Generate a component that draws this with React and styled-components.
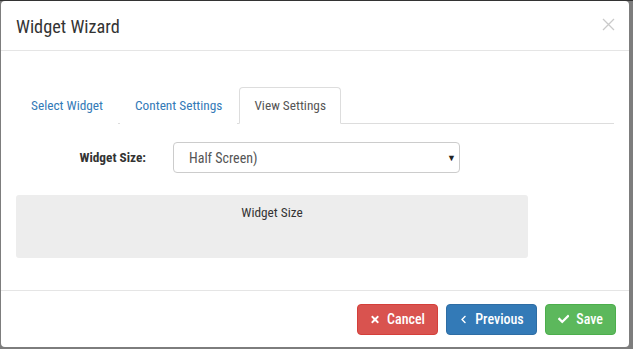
import styled, { createGlobalStyle } from "styled-components";
import { FaTimes, FaChevronLeft, FaCheck } from "react-icons/fa";

const GlobalStyle = createGlobalStyle`
  * { box-sizing: border-box; }
  html, body { margin: 0; height: 100%; }
  body {
    background: #7d7d7d;
    border-top: 1px solid #333;
    font-family: Roboto, "Liberation Sans", Arial, sans-serif;
    font-stretch: condensed;
    font-size: 14px;
    color: #333;
  }
`;

const Modal = styled.div`
  margin: 0 4px 0 1px;
  height: 346px;
  background: #fff;
  border-radius: 4px;
  display: flex;
  flex-direction: column;
`;

const Header = styled.div`
  height: 50px;
  padding: 0 15px;
  display: flex;
  align-items: center;
  justify-content: space-between;
  border-bottom: 1px solid #e5e5e5;
`;

const Title = styled.h4`
  margin: 0;
  padding-top: 2px;
  font-size: 18.3px;
  font-weight: 400;
  color: #333;
`;

const Close = styled.button`
  border: 0;
  background: none;
  padding: 0;
  margin: 0 -1px 2px 0;
  display: flex;
  color: #cacaca;
`;

const Body = styled.div`
  flex: 1;
  padding: 36px 15px 0;
`;

const Tabs = styled.ul`
  list-style: none;
  margin: 0;
  padding: 0;
  display: flex;
  border-bottom: 1px solid #ddd;
`;

const Tab = styled.li`
  height: 37px;
  padding: 0 14px;
  margin-right: 2px;
  margin-bottom: -1px;
  display: flex;
  align-items: center;
  font-size: 13.3px;
  color: ${(p) => (p.$active ? "#555" : "#337ab7")};
  background: #fff;
  border: 1px solid ${(p) => (p.$active ? "#ddd" : "transparent")};
  border-bottom-color: ${(p) => (p.$active ? "#fff" : "transparent")};
  border-radius: 4px 4px 0 0;
`;

const FormRow = styled.div`
  display: flex;
  align-items: center;
  margin-top: 18px;
`;

const Label = styled.label`
  width: 130px;
  text-align: right;
  font-size: 13.3px;
  font-weight: 700;
  color: #333;
`;

const Select = styled.div`
  margin-left: 27px;
  width: 287px;
  height: 31px;
  padding: 0 3px 0 15px;
  border: 1px solid #ccc;
  border-radius: 4px;
  display: flex;
  align-items: center;
  justify-content: space-between;
  color: #555;
`;

const Arrow = styled.span`
  font-size: 9px;
  color: #222;
`;

const Preview = styled.div`
  margin-top: 22px;
  width: 512px;
  height: 63px;
  background: #ededed;
  border-radius: 3px;
  text-align: center;
  padding-top: 10px;
  font-size: 13.3px;
  color: #333;
`;

const Footer = styled.div`
  height: 57px;
  border-top: 1px solid #e5e5e5;
  padding: 0 13px 0 15px;
  display: flex;
  align-items: center;
  justify-content: flex-end;
  gap: 8px;
`;

const Button = styled.button`
  height: 31px;
  padding: 0 12px;
  border: 1px solid ${(p) => p.$border};
  background: ${(p) => p.$bg};
  color: #fff;
  border-radius: 4px;
  font-family: Roboto, "Liberation Sans", Arial, sans-serif;
  font-stretch: condensed;
  font-weight: 500;
  font-size: 14px;
  display: flex;
  align-items: center;
  gap: 7px;
  width: ${(p) => p.$w}px;
  justify-content: center;
`;

export default function App() {
  return (
    <>
      <GlobalStyle />
      <Modal>
        <Header>
          <Title>Widget Wizard</Title>
          <Close>
            <svg width="13" height="13" viewBox="0 0 13 13">
              <path d="M1 1L12 12M12 1L1 12" stroke="currentColor" strokeWidth="1.3" />
            </svg>
          </Close>
        </Header>
        <Body>
          <Tabs>
            <Tab>Select Widget</Tab>
            <Tab>Content Settings</Tab>
            <Tab $active>View Settings</Tab>
          </Tabs>
          <FormRow>
            <Label>Widget Size:</Label>
            <Select>
              Half Screen)
              <Arrow>▼</Arrow>
            </Select>
          </FormRow>
          <Preview>Widget Size</Preview>
        </Body>
        <Footer>
          <Button $bg="#d9534f" $border="#d43f3a" $w={81}>
            <FaTimes size={11} /> Cancel
          </Button>
          <Button $bg="#337ab7" $border="#2e6da4" $w={91}>
            <FaChevronLeft size={9} /> Previous
          </Button>
          <Button $bg="#5cb85c" $border="#4cae4c" $w={71}>
            <FaCheck size={12} /> Save
          </Button>
        </Footer>
      </Modal>
    </>
  );
}
